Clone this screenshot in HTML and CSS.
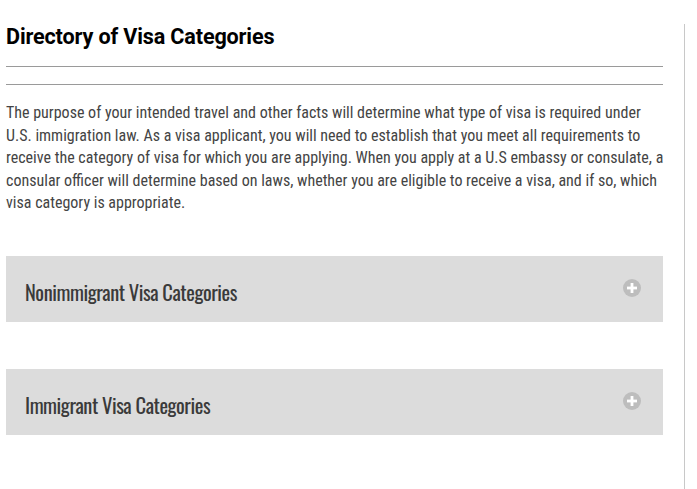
FILE: index.html
```html
<!DOCTYPE html>
<html>
<head>
<meta charset="utf-8">
<link rel="stylesheet" href="styles.css">
</head>
<body>
<div class="page">
  <main class="content">
    <h1 class="title">Directory of Visa Categories</h1>
    <hr class="rule rule-first">
    <hr class="rule rule-second">
    <p class="intro">The purpose of your intended travel and other facts will determine what type of visa is required under<br>U.S. immigration law. As a visa applicant, you will need to establish that you meet all requirements to<br>receive the category of visa for which you are applying. When you apply at a U.S embassy or consulate, a<br>consular officer will determine based on laws, whether you are eligible to receive a visa, and if so, which<br>visa category is appropriate.</p>
    <div class="accordion acc-first">
      <span class="acc-title">Nonimmigrant Visa Categories</span>
      <span class="acc-icon"><svg width="18" height="18" viewBox="0 0 18 18"><circle cx="9" cy="9" r="9" fill="#bdbdbd"/><rect x="4" y="7.6" width="10" height="2.8" fill="#fff"/><rect x="7.6" y="4" width="2.8" height="10" fill="#fff"/></svg></span>
    </div>
    <div class="accordion acc-second">
      <span class="acc-title">Immigrant Visa Categories</span>
      <span class="acc-icon"><svg width="18" height="18" viewBox="0 0 18 18"><circle cx="9" cy="9" r="9" fill="#bdbdbd"/><rect x="4" y="7.6" width="10" height="2.8" fill="#fff"/><rect x="7.6" y="4" width="2.8" height="10" fill="#fff"/></svg></span>
    </div>
  </main>
  <aside class="sidebar"></aside>
</div>
</body>
</html>
```
FILE: styles.css
```css
html, body {
  margin: 0;
  padding: 0;
  background: #fff;
}
.page {
  display: flex;
  width: 697px;
  height: 489px;
  overflow: hidden;
}
.content {
  width: 657px;
  margin-left: 6px;
  flex: none;
}
.sidebar {
  margin-left: 21px;
  margin-top: 24px;
  width: 0;
  border-left: 1px solid #c8c8c8;
  height: 465px;
}
.title {
  margin: 0;
  padding-top: 23px;
  font-family: Roboto, "Liberation Sans", sans-serif;
  font-weight: 700;
  font-size: 21.6px;
  line-height: 27px;
  color: #000;
  letter-spacing: -0.15px;
}
.rule {
  border: 0;
  border-top: 1px solid #9a9a9a;
  margin: 0;
  height: 0;
}
.rule-first { margin-top: 16px; }
.rule-second { margin-top: 17px; }
.intro {
  margin: 17px 0 0 0;
  font-family: "Roboto Condensed", "Liberation Sans Narrow", "DejaVu Sans Condensed", sans-serif;
  font-size: 16px;
  line-height: 22.5px;
  color: #444;
  white-space: nowrap;
}
.accordion {
  display: flex;
  align-items: center;
  justify-content: space-between;
  background: #dcdcdc;
  height: 66px;
  padding: 0 22px 0 19px;
  box-sizing: border-box;
}
.acc-first { margin-top: 41px; }
.acc-second { margin-top: 47px; }
.acc-title {
  font-family: "Oswald", "Roboto Condensed", "Liberation Sans Narrow", "DejaVu Sans Condensed", sans-serif;
  font-size: 20.5px;
  letter-spacing: -0.45px;
  color: #3a3a3a;
  padding-top: 6px;
}
.acc-icon {
  display: flex;
  margin-top: -1px;
}
```
